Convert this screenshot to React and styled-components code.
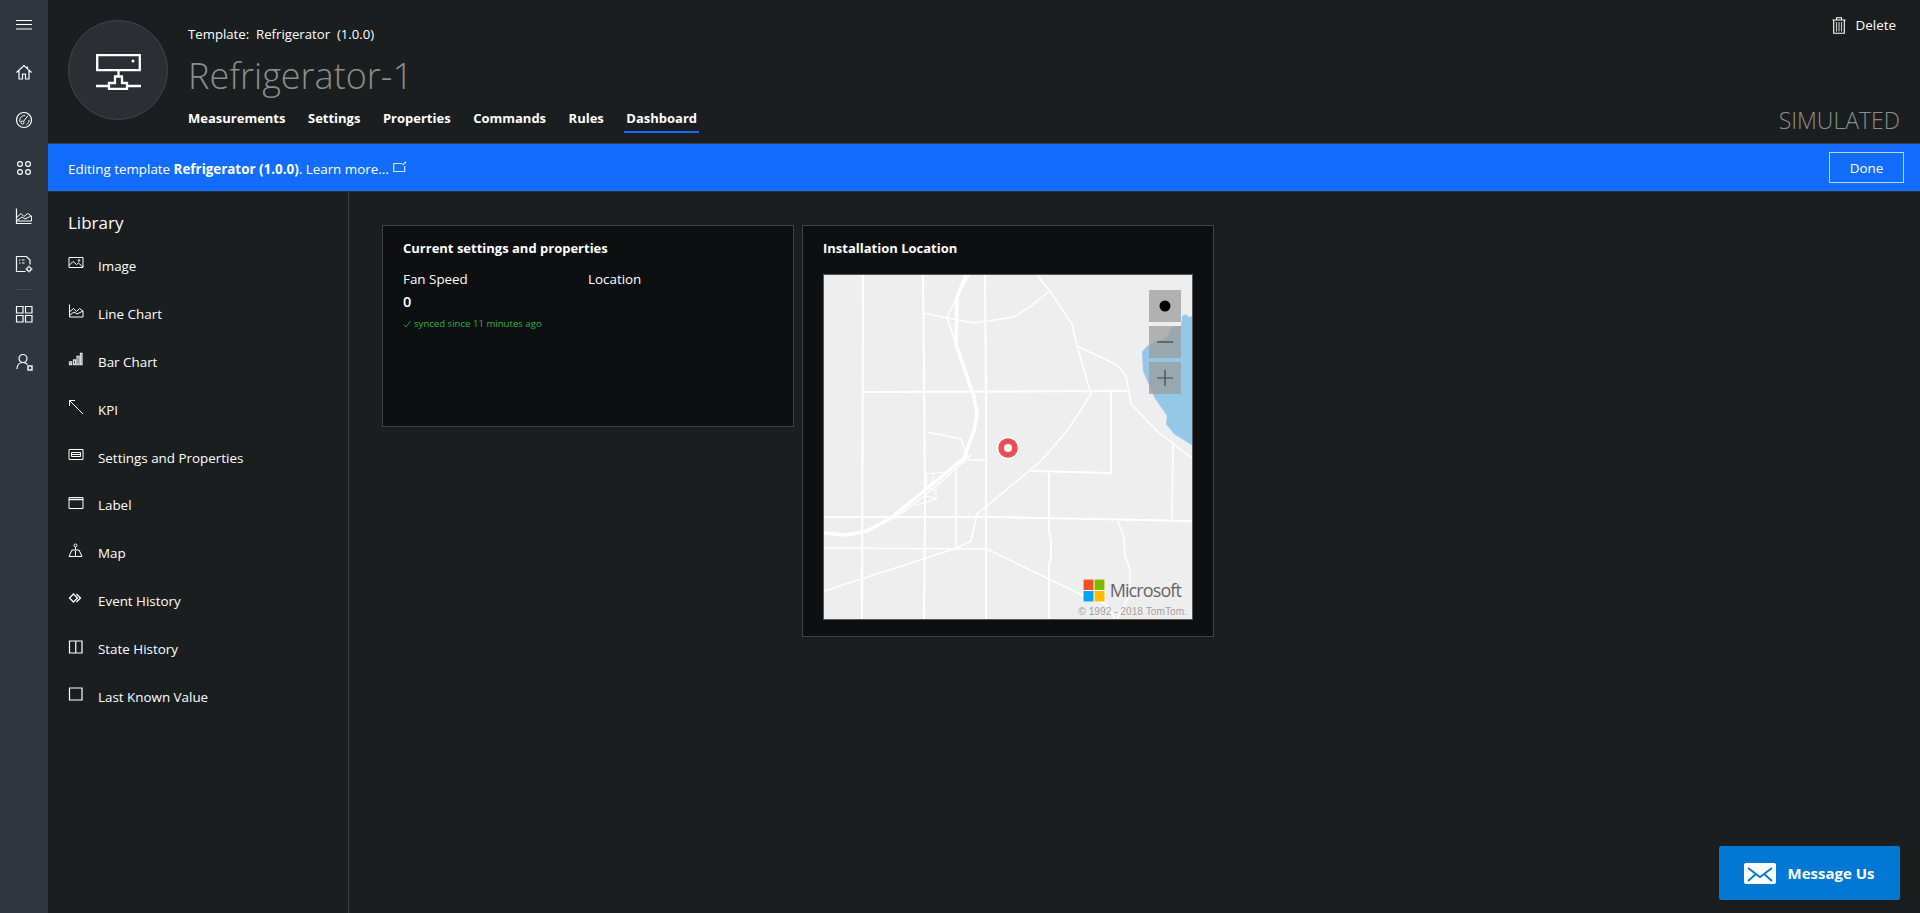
import React from 'react';
import styled, { createGlobalStyle } from 'styled-components';

const GlobalStyle = createGlobalStyle`
  html, body {
    margin: 0;
    height: 100%;
    background: #1a1e1f;
    overflow: hidden;
  }
  body {
    font-family: "Open Sans", "Noto Sans", "Liberation Sans", sans-serif;
    color: #fff;
  }
  #root {
    height: 100%;
  }
  * {
    box-sizing: border-box;
  }
`;

const Page = styled.div`
  position: relative;
  display: flex;
  width: 1920px;
  height: 913px;
  background: #1a1e1f;
`;

const Nav = styled.nav`
  flex: 0 0 48px;
  display: flex;
  flex-direction: column;
  align-items: center;
  background: #2f3640;
`;

const NavButton = styled.div`
  display: flex;
  align-items: center;
  justify-content: center;
  width: 48px;
  height: 48px;
`;

const NavDivider = styled.div`
  width: 16px;
  height: 1px;
  margin-top: 1px;
  background: #454c55;
`;

const Main = styled.div`
  flex: 1;
  display: flex;
  flex-direction: column;
  min-width: 0;
`;

const Header = styled.header`
  display: flex;
  height: 144px;
  border-bottom: 1px solid #3c4145;
  padding: 20px 20px 0 20px;
`;

const Avatar = styled.div`
  flex: 0 0 100px;
  display: flex;
  align-items: center;
  justify-content: center;
  width: 100px;
  height: 100px;
  padding-top: 3px;
  border-radius: 50%;
  background: #2b2f33;
  border: 1px solid #414548;
`;

const HeaderInfo = styled.div`
  flex: 1;
  margin-left: 20px;
  display: flex;
  flex-direction: column;
`;

const TemplateLine = styled.div`
  font-size: 13.2px;
  line-height: 18px;
  margin-top: 5px;
  white-space: pre;
`;

const DeviceName = styled.h1`
  margin: 10px 0 0;
  font-size: 36px;
  line-height: 46px;
  font-weight: 300;
  color: #8d8d8d;
`;

const Tabs = styled.div`
  display: flex;
  gap: 18.5px;
  margin: 10px 0 0 -2px;
`;

const Tab = styled.div`
  font-size: 13px;
  font-weight: 700;
  line-height: 18px;
  padding: 0 2px 4px;
  border-bottom: 2px solid ${(props) => (props.active ? '#126dff' : 'transparent')};
`;

const HeaderRight = styled.div`
  display: flex;
  flex-direction: column;
  align-items: flex-end;
  justify-content: space-between;
  height: 117px;
  margin-top: -3px;
`;

const DeleteButton = styled.div`
  display: flex;
  align-items: center;
  gap: 10px;
  font-size: 13.4px;
  line-height: 18px;
  padding-right: 4px;
  margin-top: -1px;
`;

const Simulated = styled.div`
  font-size: 23px;
  font-weight: 300;
  line-height: 28px;
  color: #8d8d8d;
`;

const Banner = styled.div`
  display: flex;
  align-items: center;
  justify-content: space-between;
  height: 48px;
  padding: 0 16px 0 20px;
  background: #126dff;
  font-size: 13.4px;
  border-bottom: 1px solid #2c3238;
`;

const BannerText = styled.div`
  display: flex;
  align-items: center;
  margin-top: 2px;
  white-space: pre;

  b {
    font-weight: 700;
  }

  svg {
    margin: -4px 0 0 4px;
  }
`;

const DoneButton = styled.div`
  display: flex;
  align-items: center;
  justify-content: center;
  width: 75px;
  height: 31px;
  border: 1px solid #c8d2e2;
  font-size: 13.4px;
`;

const Body = styled.div`
  flex: 1;
  display: flex;
  min-height: 0;
`;

const Library = styled.aside`
  flex: 0 0 301px;
  border-right: 1px solid #3c4145;
  padding: 19px 0 0 20px;
`;

const LibraryTitle = styled.div`
  font-size: 17px;
  line-height: 24px;
  margin-bottom: 7px;
`;

const LibraryItem = styled.div`
  display: flex;
  align-items: center;
  height: 47.9px;
  font-size: 13.4px;
`;

const ItemIcon = styled.span`
  flex: 0 0 30px;
  display: flex;
  margin-top: -5px;
`;

const Canvas = styled.main`
  flex: 1;
  display: flex;
  align-items: flex-start;
  gap: 8px;
  padding: 33px 0 0 33px;
`;

const Card = styled.section`
  width: ${(props) => props.width}px;
  height: ${(props) => props.height}px;
  background: #0d0f11;
  border: 1px solid #404346;
  padding: 12px 20px;
`;

const CardTitle = styled.h3`
  margin: 0;
  font-size: 13px;
  font-weight: 700;
  line-height: 20px;
`;

const FieldGrid = styled.div`
  display: grid;
  grid-template-columns: 185px 185px;
  margin-top: 12px;
`;

const FieldLabel = styled.div`
  font-size: 13.4px;
  line-height: 18px;
`;

const FieldValue = styled.div`
  font-size: 14.5px;
  font-weight: 600;
  line-height: 20px;
  margin-top: 4px;
`;

const SyncNote = styled.div`
  display: flex;
  align-items: center;
  gap: 3px;
  font-size: 9.6px;
  line-height: 12px;
  color: #2db342;
  margin-top: 6px;
`;

const MapFrame = styled.div`
  position: relative;
  width: 370px;
  height: 346px;
  margin-top: 16px;
  border: 1px solid #55585a;
  background: #eeeeee;
  overflow: hidden;

  > svg {
    display: block;
  }
`;

const MapControls = styled.div`
  position: absolute;
  top: 15px;
  right: 11px;
  display: flex;
  flex-direction: column;
  gap: 4px;
`;

const MapControl = styled.div`
  display: flex;
  align-items: center;
  justify-content: center;
  width: 32px;
  height: 32px;
  background: rgba(155, 155, 155, 0.74);
`;

const MapBrand = styled.div`
  position: absolute;
  right: 11px;
  bottom: 17px;
  display: flex;
  align-items: center;
  gap: 5px;
  font-size: 18px;
  letter-spacing: -0.9px;
  line-height: 23px;
  color: #666;
`;

const MapCopyright = styled.div`
  position: absolute;
  right: 5px;
  bottom: 1px;
  font-family: "Liberation Sans", Arial, sans-serif;
  font-size: 10.2px;
  line-height: 12px;
  color: #a0a0a0;
`;

const MessageButton = styled.div`
  position: absolute;
  right: 20px;
  bottom: 13px;
  display: flex;
  align-items: center;
  justify-content: center;
  gap: 11px;
  width: 181px;
  height: 54px;
  border-radius: 2px;
  background: #0078d4;
  font-size: 15px;
  font-weight: 700;
`;

const Line = ({ size = 20, children, stroke = '#fff', width = 1 }) => (
  <svg width={size} height={size} viewBox="0 0 20 20" fill="none" stroke={stroke} strokeWidth={width}>
    {children}
  </svg>
);

const Small = ({ children, stroke, width }) => (
  <svg width="16" height="16" viewBox="0 0 16 16" fill="none" stroke={stroke || '#fff'} strokeWidth={width || 1}>
    {children}
  </svg>
);

const MenuIcon = () => (
  <Line>
    <path d="M2 6.500h16M2 10.500h16M2 15h16" />
  </Line>
);
const HomeIcon = () => (
  <Line>
    <path d="M2.500 10.500 10 3.500l7.500 7M5 9v8h3.500v-5h3v5H15V9M13.500 4.500v2.500" strokeWidth="1.200" />
  </Line>
);
const GaugeIcon = () => (
  <Line>
    <circle cx="10" cy="10" r="7.500" strokeWidth="1.200" />
    <circle cx="8.500" cy="12.500" r="1.500" />
    <path d="M9.500 11.500 14 5.500M6 12c-1-3 1-6.500 5-6.500M15 10c0 2-1 3.500-2.500 4.500" />
  </Line>
);
const AppsIcon = () => (
  <Line>
    <circle cx="6" cy="6" r="2.400" strokeWidth="1.200" />
    <circle cx="14" cy="6" r="2.400" strokeWidth="1.200" />
    <circle cx="6" cy="14" r="2.400" strokeWidth="1.200" />
    <circle cx="14" cy="14" r="2.400" strokeWidth="1.200" />
  </Line>
);
const AnalyticsIcon = () => (
  <Line>
    <path d="M2.500 2.500v15H17.500" strokeWidth="1.200" />
    <path d="M2.500 11.500 7 7.500l3 3 3.500-3 4 2.500v5h-15" />
    <path d="M3 14.500 8 11l3 2 6-3" />
  </Line>
);
const JobsIcon = () => (
  <Line>
    <path d="M11.500 17.500h-9v-15h10L16 6v4.500" strokeWidth="1.200" />
    <path d="M5 6h1.500M8 6h2.500M5 9h1.500M8 9h2.500" />
    <circle cx="15" cy="15" r="2" strokeWidth="1.200" />
    <path d="M15 11.500V13M15 17v1.500M11.500 15H13M17 15h1.500" />
  </Line>
);
const DashboardIcon = () => (
  <Line>
    <path d="M2.500 2.500h6.500v6.500H2.500zM11.500 2.500H18v6.500h-6.500zM2.500 11.500h6.500V18H2.500zM11.500 11.500H18V18h-6.500z" strokeWidth="1.200" />
  </Line>
);
const AdminIcon = () => (
  <Line>
    <circle cx="9" cy="6.500" r="4" strokeWidth="1.200" />
    <path d="M3 17c0-4 2.500-6.500 6-6.500 2 0 3.500.8 4.500 2" strokeWidth="1.200" />
    <rect x="14" y="14" width="4" height="4" strokeWidth="1.400" />
  </Line>
);

const ImageIcon = () => (
  <Small>
    <path d="M1 2.500h14v10H1z" />
    <path d="M1 10.500 5 6.500l3.500 3 2-1.500 4.500 4" />
    <circle cx="11" cy="5.500" r=".8" />
  </Small>
);
const LineChartIcon = () => (
  <Small>
    <path d="M1.500 1.500v12.500H15" />
    <path d="M1.500 9 5.500 5.500l3 3 3-3 3.500 2.500v6" />
    <path d="M2 12l4-3 3 2 6-3" />
  </Small>
);
const BarChartIcon = () => (
  <Small stroke="#ddd" width={1.300}>
    <path d="M1.500 11h2v2.500h-2zM5.500 9h2v4.500h-2zM9 5.500h2v8H9zM12.500 2.500H14v11h-1.500z" />
  </Small>
);
const KpiIcon = () => (
  <Small>
    <path d="M15 15 1.500 1.500M1.500 7V1.500H7" />
  </Small>
);
const SettingsIcon = () => (
  <Small>
    <path d="M1 2.500h14v10H1z" />
    <path d="M3.500 5.500h9v4h-9z" />
    <path d="M3.500 7.500h9" />
  </Small>
);
const LabelIcon = () => (
  <Small>
    <path d="M1 2.500h14v11H1z" />
    <path d="M1 4.500h14" strokeWidth="1.500" />
  </Small>
);
const MapIcon = () => (
  <Small>
    <circle cx="7.500" cy="2.500" r="1.500" />
    <path d="M7.500 4v3M1 13.500 4 7h7l3 6.500zM7.500 8v5.500" />
  </Small>
);
const EventIcon = () => (
  <Small width={1.300}>
    <path d="M1.500 7 5.500 3l4 4-4 4z" />
    <path d="M8.500 3l4 4-4 4" />
  </Small>
);
const StateIcon = () => (
  <Small width={1.200}>
    <path d="M1.500 2h12.500v12H1.500zM7.750 2v12" />
  </Small>
);
const ValueIcon = () => (
  <Small width={1.200}>
    <path d="M1.500 2h12.500v12H1.500z" />
  </Small>
);

const DeviceIcon = () => (
  <svg width="45" height="36" viewBox="0 0 45 36" fill="none" stroke="#fff" strokeWidth="2.300">
    <path d="M1.200 1.200h42.600v15H1.200z" />
    <path d="M22.500 17v5.500M19 22.500h7v6.500h5v6H13v-6h6zM0 32h13M31 32h14" />
    <circle cx="37" cy="7" r="1.500" fill="#fff" stroke="none" />
  </svg>
);

const TrashIcon = () => (
  <svg width="14" height="17" viewBox="0 0 14 17" fill="none" stroke="#fff" strokeWidth="1.100">
    <path d="M.5 3h13M4.500 3V.7h5V3M1.700 3v13.300h10.600V3" />
    <path d="M4.500 5v9.500M7 5v9.500M9.500 5v9.500" stroke="#d8c8c0" />
  </svg>
);

const OpenIcon = () => (
  <svg width="14" height="12" viewBox="0 0 14 12" fill="none" stroke="#dde6ff" strokeWidth="1.200">
    <path d="M9 2.500H.7v8h11V5" />
    <path d="M9.500 4 13 .7" />
  </svg>
);

const CheckIcon = () => (
  <svg width="8" height="8" viewBox="0 0 8 8" fill="none" stroke="#2db342" strokeWidth="0.800">
    <path d="M.5 4.500 3 7l4.500-6" />
  </svg>
);

const MailIcon = () => (
  <svg width="32" height="21" viewBox="0 0 32 21">
    <rect width="32" height="21" rx="2" fill="#fff" />
    <path d="M4 5 16 14 28 5M4 18l8-7M28 18l-8-7" fill="none" stroke="#0078d4" strokeWidth="1.800" />
  </svg>
);

const MicrosoftLogo = () => (
  <svg width="22" height="23" viewBox="0 0 22 23">
    <rect width="22" height="23" fill="#fff" />
    <rect x=".5" y=".5" width="10" height="10.500" fill="#f25022" />
    <rect x="11.500" y=".5" width="10" height="10.500" fill="#7fba00" />
    <rect x=".5" y="12" width="10" height="10.500" fill="#00a4ef" />
    <rect x="11.500" y="12" width="10" height="10.500" fill="#ffb900" />
  </svg>
);

const navTop = [HomeIcon, GaugeIcon, AppsIcon, AnalyticsIcon, JobsIcon];
const navBottom = [DashboardIcon, AdminIcon];

const tabs = ['Measurements', 'Settings', 'Properties', 'Commands', 'Rules', 'Dashboard'];

const libraryItems = [
  ['Image', ImageIcon],
  ['Line Chart', LineChartIcon],
  ['Bar Chart', BarChartIcon],
  ['KPI', KpiIcon],
  ['Settings and Properties', SettingsIcon],
  ['Label', LabelIcon],
  ['Map', MapIcon],
  ['Event History', EventIcon],
  ['State History', StateIcon],
  ['Last Known Value', ValueIcon],
];

// [points, stroke width] traced from the reference tile
const roads = [
  ['39,0 38,345', 2],
  ['99,0 100,100 101,230 100,345', 2],
  ['161,0 162,120 162,345', 2],
  ['142,0 133,22 132,69 150,122 153,139 150,156 140,183 100,216 67,243 43,256 23,260 0,258', 3.500],
  ['147,180 125,200 100,221 70,244', 1.500],
  ['145,0 123,42 132,69', 1.500],
  ['99,38 123,43 150,48 190,42 207,31 226,16 213,0', 1.500],
  ['226,16 248,49 253,71 267,119 243,156 217,186 153,239 147,266 133,273 0,316', 1.500],
  ['253,71 293,90 302,101 307,129 333,156 369,184', 1.500],
  ['39,117 303,116', 2],
  ['287,117 287,198 207,196', 2],
  ['225,198 225,256 227,266 227,283 225,289 225,345', 1.800],
  ['349,169 348,244', 1.500],
  ['0,242 163,242 369,246', 2],
  ['294,246 300,263 301,281 306,294 306,319 293,345', 1.500],
  ['0,273 163,274 260,321 282,329 292,345', 1.500],
  ['132,193 132,273', 1.500],
  ['103,157 137,164 145,185 162,185', 1.500],
  ['103,199 120,197', 1.200],
  ['103,199 102,213', 1.200],
  ['110,201 105,213 112,216 112,224 90,231', 1.200],
  ['102,221 112,224', 1.200],
];

const MapTile = () => (
  <svg width="368" height="344" viewBox="0 0 368 344">
    <polygon
      points="369,41 365,42 362,39 358,41 357,51 348,52 343,62 323,71 318,77 319,96 330,122 343,141 342,149 350,159 369,171"
      fill="#95c8e8"
    />
    {roads.map(([points, width]) => (
      <polyline key={points} points={points} fill="none" stroke="#fff" strokeWidth={width} />
    ))}
    <circle cx="184" cy="173" r="10.500" fill="#ef4d52" stroke="#fff" strokeWidth="1.500" />
    <circle cx="184" cy="173" r="4" fill="#fff" />
  </svg>
);

const App = () => (
  <Page>
    <GlobalStyle />
    <Nav>
      <NavButton>
        <MenuIcon />
      </NavButton>
      {navTop.map((Icon) => (
        <NavButton key={Icon.name}>
          <Icon />
        </NavButton>
      ))}
      <NavDivider />
      {navBottom.map((Icon) => (
        <NavButton key={Icon.name}>
          <Icon />
        </NavButton>
      ))}
    </Nav>
    <Main>
      <Header>
        <Avatar>
          <DeviceIcon />
        </Avatar>
        <HeaderInfo>
          <TemplateLine>Template:  Refrigerator  (1.0.0)</TemplateLine>
          <DeviceName>Refrigerator-1</DeviceName>
          <Tabs>
            {tabs.map((tab) => (
              <Tab key={tab} active={tab === 'Dashboard'}>
                {tab}
              </Tab>
            ))}
          </Tabs>
        </HeaderInfo>
        <HeaderRight>
          <DeleteButton>
            <TrashIcon />
            Delete
          </DeleteButton>
          <Simulated>SIMULATED</Simulated>
        </HeaderRight>
      </Header>
      <Banner>
        <BannerText>
          Editing template <b>Refrigerator (1.0.0)</b>. Learn more...
          <OpenIcon />
        </BannerText>
        <DoneButton>Done</DoneButton>
      </Banner>
      <Body>
        <Library>
          <LibraryTitle>Library</LibraryTitle>
          {libraryItems.map(([label, Icon]) => (
            <LibraryItem key={label}>
              <ItemIcon>
                <Icon />
              </ItemIcon>
              {label}
            </LibraryItem>
          ))}
        </Library>
        <Canvas>
          <Card width={412} height={202}>
            <CardTitle>Current settings and properties</CardTitle>
            <FieldGrid>
              <div>
                <FieldLabel>Fan Speed</FieldLabel>
                <FieldValue>0</FieldValue>
                <SyncNote>
                  <CheckIcon />
                  synced since 11 minutes ago
                </SyncNote>
              </div>
              <FieldLabel>Location</FieldLabel>
            </FieldGrid>
          </Card>
          <Card width={412} height={412}>
            <CardTitle>Installation Location</CardTitle>
            <MapFrame>
              <MapTile />
              <MapControls>
                <MapControl>
                  <svg width="12" height="12" viewBox="0 0 12 12">
                    <circle cx="6" cy="6" r="5.500" fill="#000" />
                  </svg>
                </MapControl>
                <MapControl>
                  <svg width="18" height="18" viewBox="0 0 18 18">
                    <path d="M1 9h16" stroke="#555" strokeWidth="1.500" />
                  </svg>
                </MapControl>
                <MapControl>
                  <svg width="18" height="18" viewBox="0 0 18 18">
                    <path d="M1 9h16M9 1v16" stroke="#444" strokeWidth="1.200" />
                  </svg>
                </MapControl>
              </MapControls>
              <MapBrand>
                <MicrosoftLogo />
                Microsoft
              </MapBrand>
              <MapCopyright>© 1992 - 2018 TomTom.</MapCopyright>
            </MapFrame>
          </Card>
        </Canvas>
      </Body>
    </Main>
    <MessageButton>
      <MailIcon />
      Message Us
    </MessageButton>
  </Page>
);

export default App;
